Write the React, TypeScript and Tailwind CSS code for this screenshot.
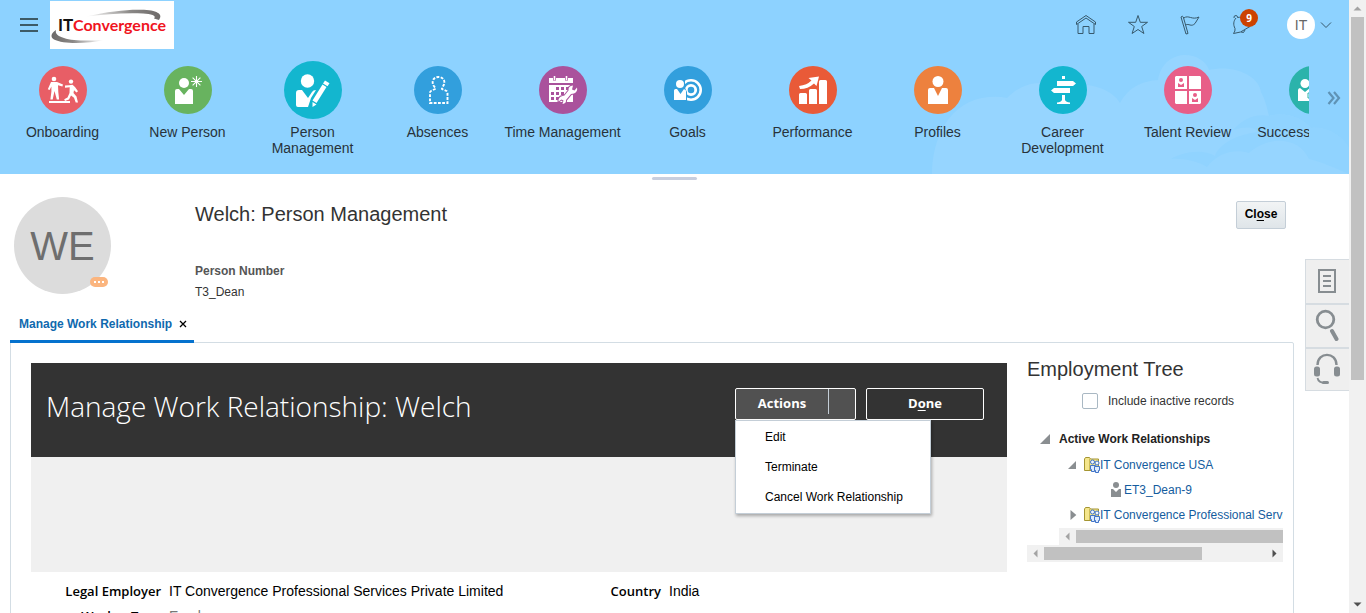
import React from "react";

type IconProps = { children: React.ReactNode; box?: string; className?: string };

function Svg({ children, box = "0 0 48 48", className = "size-12" }: IconProps) {
  return (
    <svg viewBox={box} className={className} fill="none" aria-hidden="true">
      {children}
    </svg>
  );
}

const navItems = [
  {
    label: "Onboarding",
    icon: (
      <Svg>
        <circle cx="24" cy="24" r="24" fill="#e85e66" />
        <g fill="#fff">
          <circle cx="15" cy="13" r="2.3" />
          <circle cx="32" cy="15.600" r="2.200" />
          <path d="M12 16h6l6 2.500-.6 2-4.400-1.300.3 6.800.8 7.500h-2.300L15.500 25l-1.800 8.500h-2.300l1-8v-5l-1.800 3.500-1.800-.8z" />
          <path d="M26 19.500l4-.3 3.500-.5 2.500 2.300 3 4.200-1.500 1.200-2.500-2.200-.5 2.800 3 3.500 1.500 6h-2.300l-1.700-4.700-3-2.300-2 4-4 1.500-.8-1.800 3.300-1.700 2-4.500.2-5.700-4.700.5z" />
          <rect x="10" y="35" width="21" height="2" />
        </g>
      </Svg>
    ),
  },
  {
    label: "New Person",
    icon: (
      <Svg>
        <circle cx="24" cy="24" r="24" fill="#68b35f" />
        <circle cx="20" cy="17" r="5" fill="#fff" />
        <path d="M11 25q0-2 2-2h2l5 6 5-6h2q2 0 2 2v13H11z" fill="#fff" />
        <path d="M32.500 10v11M27 15.500h11M28.600 11.600l7.800 7.800M36.400 11.600l-7.800 7.800" stroke="#fff" strokeWidth="1.100" />
      </Svg>
    ),
  },
  {
    label: "Person Management",
    large: true,
    icon: (
      <Svg box="0 0 58 58" className="size-[58px]">
        <circle cx="29" cy="29" r="29" fill="#13b6cf" />
        <circle cx="23.500" cy="20" r="6.700" fill="#fff" />
        <path d="M12 32q0-3 3-3h3l6 8 4-6q1-2 4-2h0l-5 8-3 9H14q-2 0-2-2z" fill="#fff" />
        <path d="M38.500 23.500l4 2.500-10 16-4-2.500zM41 19.500l4.500 2.700-2 3-4.500-2.700zM28.500 41l4 2.500-4 2.500z" fill="#fff" />
      </Svg>
    ),
  },
  {
    label: "Absences",
    icon: (
      <Svg>
        <circle cx="24" cy="24" r="24" fill="#329fdd" />
        <path d="M21 21.500c-2-2-2.500-4-2.300-6 .5-6 11-6 11.600 0 .2 2-.3 4-2.300 6v1.500l4.500 2q1 .5 1 2v10H16V27q0-1.500 1-2l4-2z" stroke="#fff" strokeWidth="1.900" strokeDasharray="2.800 1.400" />
      </Svg>
    ),
  },
  {
    label: "Time Management",
    icon: (
      <Svg>
        <circle cx="24" cy="24" r="24" fill="#aa529c" />
        <path d="M10 12h4v2.500h3V12h9v2.500h3V12h5v5H10zM10 19h24v17H10z" fill="#fff" />
        <path d="M15.500 10v4M27.500 10v4" stroke="#fff" strokeWidth="1.600" />
        <path d="M17 21h3v3h-3zM22 21h3v3h-3zM27 21h3v3h-3zM12 26h3v3h-3zM17 26h3v3h-3zM22 26h3v3h-3zM12 31h3v3h-3zM17 31h3v3h-3z" fill="#aa529c" />
        <path d="M34 19.500l-1 4 2.500 1 2.500-3q1 4-3 6l-3 .5-5 6q.5 3.500-3.500 4l1-3.500-2-1-3 2q-.5-4.500 4-5.500l2-.5 4-5q-.5-4.500 4.500-5z" fill="#fff" stroke="#aa529c" strokeWidth="2" paintOrder="stroke" />
      </Svg>
    ),
  },
  {
    label: "Goals",
    icon: (
      <Svg>
        <circle cx="24" cy="24" r="24" fill="#329fdd" />
        <circle cx="27" cy="24" r="9.700" stroke="#fff" strokeWidth="2.600" />
        <circle cx="27" cy="24" r="4.700" stroke="#fff" strokeWidth="2.800" />
        <path d="M8 12h13v10l2 4v10H8z" fill="#329fdd" />
        <circle cx="16" cy="18" r="4" fill="#fff" />
        <path d="M10 24.500q0-1.500 1.500-1.500h1.500l3.500 5 3.500-5 2 1.500V34H10z" fill="#fff" />
      </Svg>
    ),
  },
  {
    label: "Performance",
    icon: (
      <Svg>
        <circle cx="24" cy="24" r="24" fill="#e95a38" />
        <g fill="#fff">
          <path d="M10 28.500q0-1.500 1.500-1.500h5q1.500 0 1.500 1.500V38h-8zM20 24.500q0-1.500 1.500-1.500h5q1.500 0 1.500 1.500V38h-8zM30 15.500q0-1.500 1.500-1.500h5q1.500 0 1.500 1.500V38h-8z" />
          <path d="M10 20q8-1 12.500-5.500L19.500 12l10.500-1.500L27.500 20 25 17.500Q19 23 11 23z" />
        </g>
      </Svg>
    ),
  },
  {
    label: "Profiles",
    icon: (
      <Svg>
        <circle cx="24" cy="24" r="24" fill="#ed813e" />
        <circle cx="24" cy="15.500" r="5.500" fill="#fff" />
        <path d="M14 24q0-2 2-2h4l4 8 4-8h4q2 0 2 2v14H14z" fill="#fff" />
      </Svg>
    ),
  },
  {
    label: "Career Development",
    icon: (
      <Svg>
        <circle cx="24" cy="24" r="24" fill="#13b6cf" />
        <path d="M23 10h3v3h-3zM18 15h16l3 2.500-3 2.500H18zM31 22v5H15l-3-2.500 3-2.500zM23 29h3v5q1 2 5 2.500V38H18v-1.500q4-.5 5-2.500z" fill="#fff" />
      </Svg>
    ),
  },
  {
    label: "Talent Review",
    icon: (
      <Svg>
        <circle cx="24" cy="24" r="24" fill="#e85e88" />
        <path d="M12 10h11v13H11V11zM25 10h11l1 1v12H25zM11 25h12v13H12l-1-1zM25 25h12v12l-1 1H25z" fill="#fff" />
        <g fill="#e85e88">
          <circle cx="17" cy="14" r="2" />
          <path d="M14 17l3 2 3-2v4h-6z" />
          <circle cx="31" cy="29" r="2" />
          <path d="M28 32l3 2 3-2v4h-6z" />
        </g>
      </Svg>
    ),
  },
  {
    label: "Succession Plans",
    icon: (
      <Svg>
        <circle cx="24" cy="24" r="24" fill="#2bb3ab" />
        <circle cx="16" cy="17.500" r="4.500" fill="#fff" />
        <path d="M9 24q0-1.500 2-2l5 4 5-4 9 1v12H9z" fill="#fff" />
        <path d="M24 27h-5v5h5" stroke="#2bb3ab" />
      </Svg>
    ),
  },
];

function Clouds() {
  return (
    <svg className="absolute right-0 bottom-0 h-[130px] w-[420px]" viewBox="0 0 420 130" aria-hidden="true">
      <path d="M3 130C3 95 20 56 60 53q10-1 18 1C90 42 105 36 120 41c30-4 60 0 71 18C200 42 215 37 229 36c3-18 16-25 27-25s21 6 24 15c25-6 50 6 52 22 5 10 6 16 8 24 20-5 35 4 42 12 14-2 30 6 38 20v26z" fill="#96d5ff" />
      <path d="M340 72c-12-3-26 2-36 14 14-4 20-3 26 2-22 2-40 12-44 24-14-8-34-3-44 3 12-1 26 2 36 8 12-16 30-18 42-14 20-18 50-16 60 6 10 2 24 8 40 15V104c-8-14-24-22-38-20-7-8-22-17-42-12z" fill="#90d3ff" />
    </svg>
  );
}

function Logo() {
  return (
    <svg viewBox="0 0 124 48" className="h-12 w-[124px] bg-white" role="img" aria-label="ITConvergence">
      <defs>
        <linearGradient id="swooshTop">
          <stop offset="0" stopColor="#fff" />
          <stop offset="0.600" stopColor="#8a8886" />
          <stop offset="1" stopColor="#6d6a69" />
        </linearGradient>
        <linearGradient id="swooshBottom">
          <stop offset="0" stopColor="#6d6a69" />
          <stop offset="0.400" stopColor="#8a8886" />
          <stop offset="1" stopColor="#fff" />
        </linearGradient>
      </defs>
      <path d="M36 15.500C60 10 80 8 94 8.800c15 1 19 5 15 10.200l-5-1.500c3-3-3-4.500-11-5-19-1-38 1-57 3z" fill="url(#swooshTop)" />
      <path d="M6 29c-5 3-6 7-2 9.500 10 5 34 4 50 .5-14 1-32 1-40-2-6-2-9-4-8-8z" fill="url(#swooshBottom)" />
      <text x="8" y="30" fontFamily="Lato,'Open Sans',sans-serif" fontSize="17" fontWeight="700" fill="#111">IT</text>
      <text x="23" y="30" fontFamily="Lato,'Open Sans',sans-serif" fontSize="16" fontWeight="700" fill="#f0141e">Convergence</text>
    </svg>
  );
}

function Header() {
  return (
    <header className="relative h-[174px] overflow-hidden bg-[#8dd2ff]">
      <Clouds />
      <div className="relative flex h-[50px] items-center pl-5 pr-[17px]">
        <button aria-label="Navigator" className="mr-3 flex w-[18px] flex-col gap-1">
          <span className="h-0.5 w-full bg-[#3d5a66]" />
          <span className="h-0.5 w-full bg-[#3d5a66]" />
          <span className="h-0.5 w-full bg-[#3d5a66]" />
        </button>
        <Logo />
        <div className="ml-auto flex items-center text-[#37596c]">
          <button aria-label="Home">
            <Svg box="0 0 22 22" className="size-[22px]">
              <path d="M1.500 10.500V8L11 1.500 20.500 8v2.500L11 4zM3 10v9.500h5v-7h6v7h5V10" stroke="currentColor" />
            </Svg>
          </button>
          <button aria-label="Favorites" className="ml-[30px]">
            <Svg box="0 0 22 22" className="size-[22px]">
              <path d="M11 1.500l2.300 6.800H20.500l-5.800 4.200 2.200 7L11 15.500l-5.900 4 2.200-7-5.800-4.200h7.200z" stroke="currentColor" />
            </Svg>
          </button>
          <button aria-label="Watchlist" className="ml-[30px]">
            <Svg box="0 0 22 22" className="size-[22px]">
              <path d="M2 3q1.500-1.500 2.300 0L9 19.500l-2 .5zM4.800 4c5-3.500 8 2.500 15.200-1L16 9.500c-4 4-6-.5-9.500 1.500" stroke="currentColor" />
            </Svg>
          </button>
          <button aria-label="Notifications, 9 unread" className="relative ml-[30px]">
            <Svg box="0 0 22 22" className="size-[22px]">
              <path d="M3 4Q2.500 1.500 5 1.500 7 2 6.500 3.500c5-1 9 1 10 5l2.500 4-9.500 5.500L2.500 19.500q2-2.500 1.500-5C2 10.500 2.500 7 5 4M10 18q3 2 4-2" stroke="currentColor" />
            </Svg>
            <span className="absolute -top-[5px] left-[9px] flex size-[18px] items-center justify-center rounded-full bg-[#cc4200] font-['Open_Sans','Noto_Sans',sans-serif] text-[10px] font-bold text-white">9</span>
          </button>
          <button className="ml-[34px] flex items-center gap-[5px]" aria-label="User menu">
            <span className="flex size-7 items-center justify-center rounded-full bg-white text-sm text-[#666]">IT</span>
            <Svg box="0 0 12 8" className="h-2 w-3">
              <path d="M1 1.500l5 5 5-5" stroke="currentColor" />
            </Svg>
          </button>
        </div>
      </div>
      <nav className="relative mt-2 flex" aria-label="Springboard">
        <ul className="mr-10 flex flex-1 overflow-hidden">
          {navItems.map((item) => (
            <li key={item.label} className="w-[125px] shrink-0">
              <a href="#" className="flex flex-col items-center px-0.5 text-center text-sm leading-4 text-[#28323a]">
                <span className="flex h-16 items-center">{item.icon}</span>
                <span className={item.label.endsWith("Development") || item.large ? "mt-0.5 w-[90px]" : "mt-0.5"}>{item.label}</span>
              </a>
            </li>
          ))}
        </ul>
        <button aria-label="More" className="absolute top-[33px] right-2 text-[#5f93b5]">
          <Svg box="0 0 14 14" className="size-3.5">
            <path d="M1.500 1l5 6-5 6M7 1l5 6-5 6" stroke="currentColor" strokeWidth="2.200" />
          </Svg>
        </button>
      </nav>
    </header>
  );
}

function FolderIcon() {
  return (
    <Svg box="0 0 16 16" className="size-4 shrink-0">
      <path d="M.5 2l1-1.500h4l1 1.500h8v11.500H.5z" fill="#f5e68c" stroke="#a59532" />
      <path d="M5.500 2v11" stroke="#cdbb55" />
      <path d="M6.500 12.500v-4h5v4h-1v2h-3v-2z" fill="#dcebff" stroke="#3f73c8" />
      <circle cx="8.500" cy="5" r="2" fill="#eef5ff" stroke="#3f73c8" />
      <path d="M10.500 13.500v-4h5v4h-1v2h-3v-2z" fill="#dcebff" stroke="#3f73c8" />
      <circle cx="13" cy="6" r="2" fill="#eef5ff" stroke="#3f73c8" />
    </Svg>
  );
}

function Triangle({ open, className }: { open: boolean; className: string }) {
  return (
    <Svg box="0 0 12 12" className={className}>
      <path d={open ? "M12 0v12H0z" : "M3 0l7 6-7 6z"} fill="#8a8e91" />
    </Svg>
  );
}

function ScrollArrow({ dir, dark }: { dir: "left" | "right" | "up" | "down"; dark?: boolean }) {
  const shapes = {
    left: "M10.500 4.500v8l-4-4z",
    right: "M6.500 4.500v8l4-4z",
    up: "M4.500 10.500h8l-4-4z",
    down: "M4.500 6.500h8l-4 4z",
  };
  return (
    <Svg box="0 0 17 17" className="size-[17px] shrink-0">
      <path d={shapes[dir]} fill={dark ? "#505050" : "#a3a3a3"} />
    </Svg>
  );
}

function EmploymentTree() {
  return (
    <aside className="w-64 shrink-0 text-xs text-[#333]">
      <h2 className="-mt-1 text-xl leading-5">Employment Tree</h2>
      <div className="mt-3.5 ml-[55px] flex h-4 items-center">
        <input id="inactive" type="checkbox" className="size-4 appearance-none rounded-xs border border-[#a9b8c3] bg-white" />
        <label htmlFor="inactive" className="ml-2.5">Include inactive records</label>
      </div>
      <div className="mt-[17px]">
        <div className="flex h-[26px] items-center pl-[13px] font-bold text-[#222]">
          <Triangle open className="mr-[9px] size-2.5" />
          Active Work Relationships
        </div>
        <div className="ml-8 overflow-hidden whitespace-nowrap text-[#145c9e]">
          <div className="flex h-[25px] items-center pl-[9px]">
            <Triangle open className="mr-2 size-2 shrink-0" />
            <FolderIcon />
            <a href="#">IT Convergence USA</a>
          </div>
          <div className="flex h-[25px] items-center pl-[52px]">
            <Svg box="0 0 10 15" className="mr-[3px] h-[15px] w-2.5 shrink-0">
              <circle cx="5" cy="3" r="3" fill="#8a8e91" />
              <path d="M0 7h2l3 3 3-3h2v8H0z" fill="#8a8e91" />
            </Svg>
            <a href="#">ET3_Dean-9</a>
          </div>
          <div className="flex h-[26px] items-center pl-[9px]">
            <Triangle open={false} className="mr-1.5 size-2.5 shrink-0" />
            <FolderIcon />
            <a href="#">IT Convergence Professional Services</a>
          </div>
          <div className="flex h-[17px] items-center bg-[#f1f1f1]">
            <ScrollArrow dir="left" />
            <span className="h-[13px] flex-1 bg-[#c1c1c1]" />
          </div>
        </div>
        <div className="flex h-[17px] items-center bg-[#f1f1f1]">
          <ScrollArrow dir="left" />
          <span className="h-[13px] w-[158px] bg-[#c1c1c1]" />
          <span className="flex-1" />
          <ScrollArrow dir="right" dark />
        </div>
      </div>
    </aside>
  );
}

function WorkRelationship() {
  return (
    <section className="min-w-0 flex-1">
      <div className="flex h-[94px] items-center bg-[#333] pr-[23px] pl-[15px] font-['Open_Sans','Noto_Sans',sans-serif] text-white">
        <h2 className="pb-2 text-[28px] font-light">Manage Work Relationship: Welch</h2>
        <div className="relative mb-3 ml-auto flex gap-2.5 text-[13px] font-bold">
          <button className="flex h-8 w-[121px] items-start rounded-xs border border-white bg-[#515151]" aria-haspopup="menu" aria-expanded="true">
            <span className="h-[25px] w-[93px] border-r border-[#c4ced7] leading-7">Actions</span>
          </button>
          <button className="h-8 w-[118px] rounded-xs border border-white">
            D<u className="underline-offset-2">o</u>ne
          </button>
          <ul role="menu" className="absolute top-8 left-0 z-10 w-[196px] border border-[#c4ced7] bg-white py-px font-['Liberation_Sans',Arial,sans-serif] text-xs font-normal text-black shadow-[1px_2px_3px_rgba(0,0,0,0.3)]">
            {["Edit", "Terminate", "Cancel Work Relationship"].map((action) => (
              <li key={action} role="none">
                <button role="menuitem" className="block h-[30px] w-full pl-[29px] text-left">{action}</button>
              </li>
            ))}
          </ul>
        </div>
      </div>
      <div className="h-[115px] bg-[#f0f0f0]" />
      <dl className="grid grid-cols-[130px_426px_58px_1fr] gap-x-2 gap-y-0.5 pt-2 text-sm leading-[23px] text-black">
        <dt className="text-right font-['Open_Sans','Noto_Sans',sans-serif] text-[13px] font-semibold">Legal Employer</dt>
        <dd>IT Convergence Professional Services Private Limited</dd>
        <dt className="text-right font-['Open_Sans','Noto_Sans',sans-serif] text-[13px] font-semibold">Country</dt>
        <dd>India</dd>
        <dt className="text-right font-['Open_Sans','Noto_Sans',sans-serif] text-[13px] font-semibold">Worker Type</dt>
        <dd className="text-[#777]">Employee</dd>
      </dl>
    </section>
  );
}

function SideRail() {
  return (
    <div className="mt-[79px] w-11 shrink-0 text-[#878d91]">
      <button aria-label="Notes" className="flex h-11 w-full items-center justify-center border-t border-l border-[#d6dce1] bg-[#efefef] pr-0.5 pb-0.5">
        <Svg box="0 0 18 24" className="h-6 w-[18px]">
          <path d="M1 1h16v22H1zM5 7h8M5 12h8M5 17h8" stroke="currentColor" strokeWidth="2" />
        </Svg>
      </button>
      <button aria-label="Search" className="flex h-11 w-full items-center justify-center border-t-2 border-l border-[#d6dce1] bg-[#efefef] pr-0.5 pb-0.5">
        <Svg box="0 0 24 32" className="h-8 w-6">
          <circle cx="10.500" cy="10.500" r="8.300" stroke="currentColor" strokeWidth="2.800" />
          <path d="M17 22l4.500 8" stroke="currentColor" strokeWidth="4" strokeLinecap="round" />
        </Svg>
      </button>
      <button aria-label="Help desk" className="flex h-11 w-full items-center justify-center border-t-2 border-b border-l border-[#d6dce1] bg-[#efefef] pr-0.5 pb-0.5">
        <Svg box="0 0 28 32" className="h-8 w-7">
          <path d="M4.500 12C4.500-1.500 23.500-1.500 23.500 12" stroke="currentColor" strokeWidth="2.400" />
          <rect x="1" y="13.500" width="6" height="10" rx="2.500" fill="currentColor" />
          <rect x="21" y="13.500" width="6" height="10" rx="2.500" fill="currentColor" />
          <path d="M4.500 25q1 5 8 5" stroke="currentColor" strokeWidth="1.800" />
          <rect x="9" y="28" width="7" height="3" rx="1.500" fill="currentColor" />
        </Svg>
      </button>
    </div>
  );
}

export default function App() {
  return (
    <div className="flex h-screen overflow-hidden bg-white font-['Liberation_Sans',Arial,sans-serif] text-[#333]">
      <div className="min-w-0 flex-1 overflow-hidden">
        <Header />
        <div className="mx-auto mt-[3px] h-[3px] w-[45px] rounded-full bg-[#c8cede]" />
        <div className="flex">
          <main className="mr-[11px] ml-2.5 min-w-0 flex-1">
            <div className="flex pt-[17px] pr-2 pl-1">
              <div className="relative size-[97px] shrink-0 rounded-full bg-[#dcdcdc]">
                <div className="flex h-full items-center justify-center text-[40px] text-[#6e6e6e]">WE</div>
                <button aria-label="More details" className="absolute right-[3px] bottom-[7px] flex h-2.5 w-[18px] items-center justify-center gap-0.5 rounded-full bg-[#fbb57f]">
                  <span className="size-0.5 bg-white" />
                  <span className="size-0.5 bg-white" />
                  <span className="size-0.5 bg-white" />
                </button>
              </div>
              <div className="ml-[84px] flex-1">
                <h1 className="pt-[3px] text-xl leading-7">Welch: Person Management</h1>
                <dl className="pt-[33px] text-xs leading-[21px]">
                  <dt className="font-bold text-[#555]">Person Number</dt>
                  <dd>T3_Dean</dd>
                </dl>
              </div>
              <button className="mt-1 h-7 w-[50px] rounded-xs border border-[#c4ced7] bg-linear-to-b from-[#f2f4f5] to-[#dfe5e9] pb-0.5 text-xs font-bold text-black">
                Cl<u className="underline-offset-2">o</u>se
              </button>
            </div>
            <div className="relative -mb-px flex w-[184px] items-center border-b-3 border-[#0572ce] pt-[11px] pb-1.5 pl-[9px] text-xs leading-5 font-bold text-[#0f69ae]">
              <a href="#">Manage Work Relationship</a>
              <button aria-label="Close tab" className="ml-[7px] text-black">
                <Svg box="0 0 8 8" className="size-2">
                  <path d="M1 1l6 6M7 1L1 7" stroke="currentColor" strokeWidth="1.300" />
                </Svg>
              </button>
            </div>
            <div className="flex min-h-[300px] gap-5 rounded-tr-xs border border-[#d3dde4] pt-5 pr-2.5 pl-5">
              <WorkRelationship />
              <EmploymentTree />
            </div>
          </main>
          <SideRail />
        </div>
      </div>
      <div className="flex w-[17px] shrink-0 flex-col items-center bg-[#f1f1f1]" aria-hidden="true">
        <ScrollArrow dir="up" />
        <div className="h-[363px] w-[13px] bg-[#c1c1c1]" />
        <div className="flex-1" />
        <ScrollArrow dir="down" dark />
      </div>
    </div>
  );
}
